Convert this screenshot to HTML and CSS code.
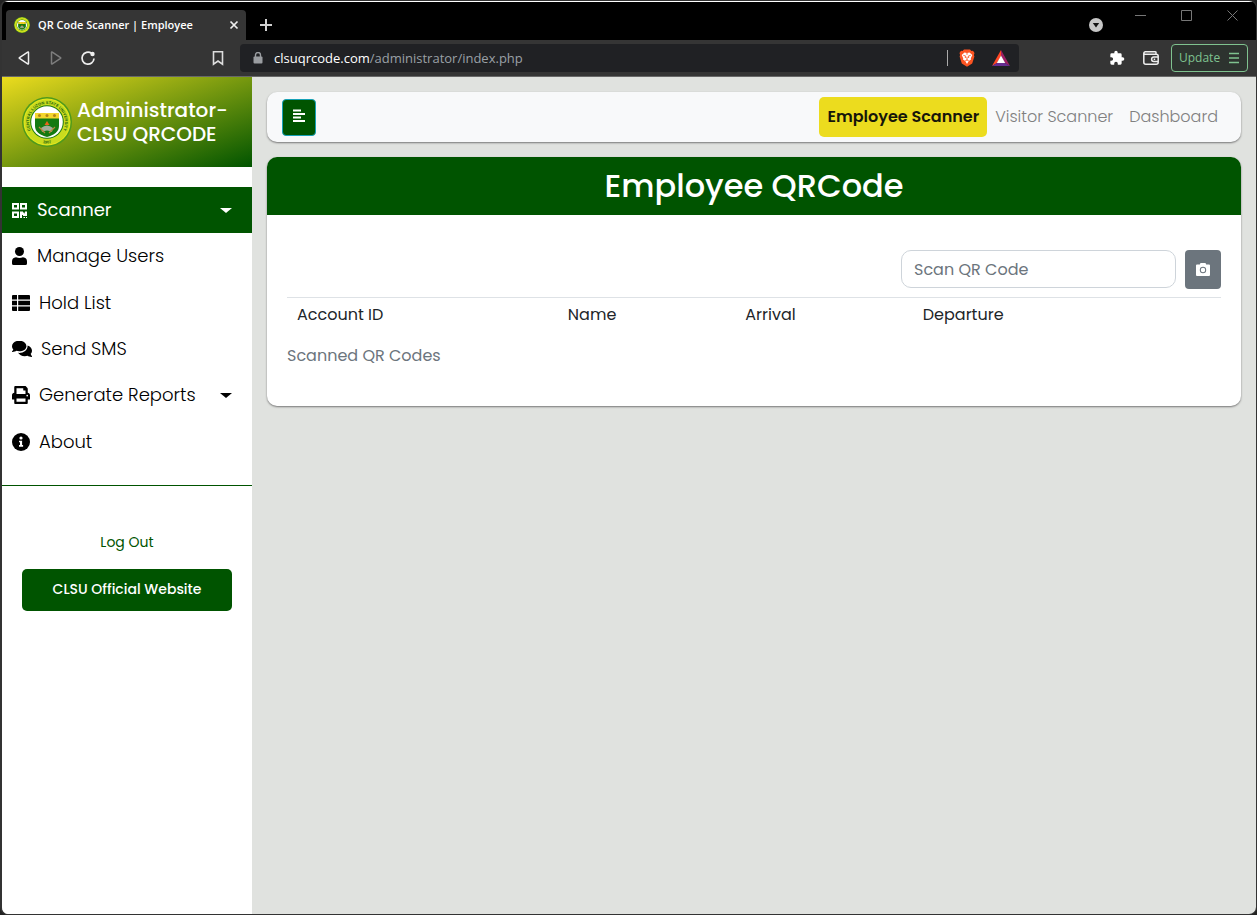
FILE: index.html
```html
<!DOCTYPE html>
<html lang="en">
<head>
<meta charset="utf-8">
<meta name="viewport" content="width=device-width, initial-scale=1">
<title>QR Code Scanner | Employee</title>
<link rel="stylesheet" href="styles.css">
</head>
<body>
<svg class="defs" width="0" height="0" aria-hidden="true">
  <symbol id="seal" viewBox="0 0 50 50">
    <circle cx="25" cy="25" r="25" fill="#4f9a1c"/>
    <circle cx="25" cy="25" r="23.500" fill="#e6e61c"/>
    <circle cx="25" cy="25" r="22.500" fill="#c9dc1e"/>
    <circle cx="25" cy="25" r="16.800" fill="#1d7a12"/>
    <circle cx="25" cy="25" r="15.800" fill="#fff"/>
    <path d="M13 16h24v13c0 6-5 9-12 11-7-2-12-5-12-11z" fill="#137a10"/>
    <path d="M13 16h24v5.500H13z" fill="#f4d62c"/>
    <g fill="#b28418"><circle cx="17.500" cy="18.500" r="1.500"/><circle cx="25" cy="18.500" r="1.500"/><circle cx="32.500" cy="18.500" r="1.500"/></g>
    <path d="M19 31q6-5 12 0l-1 4q-5-3-10 0z" fill="#9fae9b"/>
    <path d="M25 24l2.500 4h-5z" fill="#e8641b"/>
    <path d="M17 30l6 6M33 30l-6 6" stroke="#b9873b" stroke-width="1.200"/>
  </symbol>
</svg>
<div class="browser">
  <header class="chrome">
    <div class="tabs">
      <div class="tab">
        <svg class="favicon" viewBox="0 0 50 50" aria-hidden="true"><use href="#seal"/></svg>
        <span class="tab-title">QR Code Scanner | Employee</span>
        <button class="icon-btn" aria-label="Close tab"><svg width="10" height="10" viewBox="0 0 10 10"><path d="M1.500 1.500l7 7M8.500 1.500l-7 7" stroke="#eee" stroke-width="1.700"/></svg></button>
      </div>
      <button class="icon-btn new-tab" aria-label="New tab"><svg width="12" height="12" viewBox="0 0 12 12"><path d="M6 0v12M0 6h12" stroke="#d0d0d0" stroke-width="2"/></svg></button>
      <div class="window-controls">
        <button class="icon-btn tab-search" aria-label="Search tabs"><svg width="14" height="14" viewBox="0 0 14 14"><circle cx="7" cy="7" r="7" fill="#c6c6c6"/><path d="M3.800 5h6.400L7 9.500z" fill="#111"/></svg></button>
        <button class="icon-btn" aria-label="Minimize"><svg width="11" height="11" viewBox="0 0 11 11"><path d="M0 5.500h11" stroke="#777"/></svg></button>
        <button class="icon-btn" aria-label="Maximize"><svg width="11" height="11" viewBox="0 0 11 11"><path d="M.500 .500h10v10H.500z" fill="none" stroke="#777"/></svg></button>
        <button class="icon-btn" aria-label="Close window"><svg width="11" height="11" viewBox="0 0 11 11"><path d="M.500 .500l10 10M10.500 .500l-10 10" stroke="#777"/></svg></button>
      </div>
    </div>
    <div class="toolbar">
      <div class="history">
        <button class="icon-btn" aria-label="Back"><svg width="16" height="16" viewBox="0 0 16 16"><path d="M12.500 2.500v11q0 .800-.800.300L3.500 8.500q-.600-.500 0-1l8.200-5.300q.800-.500.800.300z" fill="none" stroke="#eee" stroke-width="1.500"/></svg></button>
        <button class="icon-btn" aria-label="Forward"><svg width="16" height="16" viewBox="0 0 16 16"><path d="M3.500 2.500v11q0 .800.800.300l8.200-5.300q.600-.500 0-1L4.300 2.200q-.800-.500-.800.300z" fill="none" stroke="#7d7d7d" stroke-width="1.500"/></svg></button>
        <button class="icon-btn" aria-label="Reload"><svg width="16" height="16" viewBox="0 0 16 16"><path d="M14 8.500A6 6 0 1 1 11.500 3.300" fill="none" stroke="#eee" stroke-width="1.700"/><circle cx="12.500" cy="4" r="2.200" fill="#eee"/></svg></button>
      </div>
      <button class="icon-btn" aria-label="Bookmark"><svg width="16" height="16" viewBox="0 0 16 16"><path d="M3.500 1.800h9v12.400L8 11l-4.500 3.200z" fill="none" stroke="#ddd" stroke-width="1.600"/></svg></button>
      <div class="address">
        <svg width="10" height="12" viewBox="0 0 10 12" aria-hidden="true"><path d="M2.500 5V3a2.500 2.500 0 0 1 5 0v2" fill="none" stroke="#9a9da1" stroke-width="1.400"/><rect x=".500" y="4.500" width="9" height="7" rx="1" fill="#9a9da1"/></svg>
        <span class="url"><span class="host">clsuqrcode.com</span>/administrator/index.php</span>
        <span class="divider"></span>
        <button class="icon-btn" aria-label="Brave shields"><svg width="16" height="18" viewBox="0 0 16 18"><path d="M5 .500h6l1.500 1.500 1.500-.200L15.500 4l-.600 2 .500 1.500-2.200 7L8 17.800l-5.200-3.300-2.200-7L1.100 6 .500 4 2 1.800l1.500.200z" fill="#fb5422"/><path d="M5.500 3.500L8 4l2.500-.500L13.300 6l-1.500 3.200.200 1.300-2.200 1.500L8 15l-1.800-3L4 10.500l.200-1.300L2.700 6z" fill="#fff"/><path d="M4.300 6.300l2.500.900-.600 1.800M11.700 6.300l-2.500.900.600 1.800M8 8v3M6.300 11.700L8 11l1.700.700M8 3.800v2" fill="none" stroke="#fb5422" stroke-width=".900"/></svg></button>
        <button class="icon-btn rewards" aria-label="Brave rewards"><svg width="18" height="16" viewBox="0 0 18 16"><path d="M9 0L0 16l5-3L9 6z" fill="#ff4724"/><path d="M9 0l9 16-5-3L9 6z" fill="#9e1f63"/><path d="M0 16h18l-5-3H5z" fill="#662d91"/><path d="M9 5.500l4.200 7.500H4.800z" fill="#fff"/></svg></button>
      </div>
      <div class="actions">
        <button class="icon-btn" aria-label="Extensions"><svg width="16" height="16" viewBox="0 0 24 24"><path fill="#fff" d="M20.500 11H19V7a2 2 0 0 0-2-2h-4V3.500a2.500 2.500 0 0 0-5 0V5H4a2 2 0 0 0-2 2v3.800h1.500a2.700 2.700 0 0 1 0 5.400H2V20a2 2 0 0 0 2 2h3.800v-1.500a2.700 2.700 0 0 1 5.400 0V22H17a2 2 0 0 0 2-2v-4h1.500a2.500 2.500 0 0 0 0-5z"/></svg></button>
        <button class="icon-btn" aria-label="Wallet"><svg width="16" height="14" viewBox="0 0 16 14" fill="none" stroke="#eee" stroke-width="1.500"><path d="M13 3V1.500q0-.700-1-.700H2.500Q.800.800.800 2.500v8.700q0 2 2 2h10.400q2 0 2-2V5.300q0-2-2-2H2.500Q1 3.300 1 2.300"/><path d="M15 6h-4.200a2.200 2.200 0 0 0 0 4.400H15M10.700 8.200h1.500"/></svg></button>
        <button class="update">Update <svg width="10" height="12" viewBox="0 0 10 12" aria-hidden="true"><path d="M0 1.500h10M0 6h10M0 10.500h10" stroke="#7fc28f" stroke-width="1.500"/></svg></button>
      </div>
    </div>
  </header>

  <div class="page">
    <aside class="sidebar">
      <div class="brand">
        <svg class="brand-seal" viewBox="0 0 50 50" role="img" aria-label="University seal">
          <use href="#seal"/>
          <path id="arc-top" d="M11.200 36.600A18 18 0 1 1 38.800 36.600" fill="none"/>
          <path id="arc-low" d="M17 44.500Q25 48.500 33 44.500" fill="none"/>
          <text class="seal-text"><textPath href="#arc-top" startOffset="50%">CENTRAL LUZON STATE UNIVERSITY</textPath></text>
          <text class="seal-text"><textPath href="#arc-low" startOffset="50%">1907</textPath></text>
        </svg>
        <h1>Administrator-<br>CLSU QRCODE</h1>
      </div>
      <nav class="menu" aria-label="Main">
        <a class="active" href="#scanner"><svg width="16" height="15" viewBox="0 0 16 15" fill="currentColor"><path fill-rule="evenodd" d="M0 0h7v6.500H0zM2 2v2.500h3V2zM8 0h7v6.500H8zM10 2v2.500h3V2zM0 8.500h7V15H0zM2 10.500V13h3v-2.500zM8 8.500h3v1h1.500v1H13v-2h2V13h-4v-1h-1v3H8zM11.500 14H13v1h-1.500zM14 14h1v1h-1z"/></svg>Scanner<i class="caret"></i></a>
        <a href="#users"><svg width="16" height="18" viewBox="0 0 16 18" fill="currentColor"><circle cx="7.500" cy="4.500" r="4.500"/><path d="M4 10.200q3.500 1.500 7 0 4 .300 4 4.200v2q0 1.600-1.600 1.600H1.600Q0 18 0 16.400v-2q0-3.900 4-4.200z"/></svg>Manage Users</a>
        <a href="#hold"><svg width="18" height="16" viewBox="0 0 18 16" fill="currentColor"><path d="M1 0h4v4.500H0V1q0-1 1-1zM6.200 0H17q1 0 1 1v3.500H6.200zM0 5.700h5v4.600H0zM6.200 5.700H18v4.600H6.200zM0 11.500h5V16H1q-1 0-1-1zM6.200 11.500H18V15q0 1-1 1H6.200z"/></svg>Hold List</a>
        <a href="#sms"><svg width="20" height="16" viewBox="0 0 576 448" fill="currentColor"><path d="M416 160c0-88-93-160-208-160S0 72 0 160c0 34 14 66 38 92-13 30-36 54-36 55-4 4-4 9-2 13 2 5 7 8 12 8 49 0 90-18 115-35 24 8 52 11 81 11 115 0 208-55 208-144zm122 220c24-26 38-58 38-92 0-67-54-124-130-148 1 6 2 13 2 20 0 106-108 192-240 192-11 0-21-1-32-2 32 57 106 98 192 98 29 0 57-5 81-13 25 17 66 35 115 35 5 0 10-3 12-8 1-4 1-9-2-13 0-1-23-25-36-69z" transform="translate(0 -16)"/></svg>Send SMS</a>
        <a href="#reports"><svg width="18" height="18" viewBox="0 0 512 512" fill="currentColor"><path fill-rule="evenodd" d="M448 192V77c0-8-3-17-9-23l-45-45c-6-6-14-9-23-9H96C78 0 64 14 64 32v160c-35 0-64 29-64 64v112c0 9 7 16 16 16h48v96c0 18 14 32 32 32h320c18 0 32-14 32-32v-96h48c9 0 16-7 16-16V256c0-35-29-64-64-64zm-64 256H128v-96h256zm0-224H128V64h192v48c0 9 7 16 16 16h48zm48 72a24 24 0 1 1 0-48 24 24 0 0 1 0 48z"/></svg>Generate Reports<i class="caret"></i></a>
        <a href="#about"><svg width="18" height="18" viewBox="0 0 18 18"><circle cx="9" cy="9" r="9" fill="currentColor"/><circle cx="9" cy="5" r="1.600" fill="#fff"/><path d="M7 7.700h3.100v4.300h1v1.700H7V12h1V9.300H7z" fill="#fff"/></svg>About</a>
      </nav>
      <div class="links">
        <a class="logout" href="#logout">Log Out</a>
        <a class="official" href="#website">CLSU Official Website</a>
      </div>
    </aside>
    <main class="content">
      <nav class="topbar" aria-label="Scanners">
        <button class="toggle" aria-label="Toggle sidebar"><svg width="12" height="14" viewBox="0 0 12 14"><path d="M0 1.500h8M0 5h12M0 8.500h8M0 12h12" stroke="#fff" stroke-width="1.800"/></svg></button>
        <div class="tabs-nav">
          <a class="current" href="#employee">Employee Scanner</a>
          <a href="#visitor">Visitor Scanner</a>
          <a href="#dashboard">Dashboard</a>
        </div>
      </nav>
      <section class="card">
        <h2>Employee QRCode</h2>
        <div class="card-body">
          <form class="scan">
            <input type="text" placeholder="Scan QR Code" aria-label="Scan QR Code">
            <button type="button" aria-label="Open camera"><svg width="14" height="13" viewBox="0 0 14 13"><path fill="#fff" fill-rule="evenodd" d="M4.500 0h5l.700 1.500H13q1 0 1 1V12q0 1-1 1H1q-1 0-1-1V2.500q0-1 1-1h2.800zM7 3.800a3.200 3.200 0 1 0 0 6.400 3.200 3.200 0 0 0 0-6.400zm0 1a2.200 2.200 0 1 1 0 4.400 2.200 2.200 0 0 1 0-4.400z"/></svg></button>
          </form>
          <table>
            <caption>Scanned QR Codes</caption>
            <thead><tr><th class="col-id">Account ID</th><th class="col-name">Name</th><th class="col-arrival">Arrival</th><th>Departure</th></tr></thead>
          </table>
        </div>
      </section>
    </main>
  </div>
</div>
</body>
</html>
```
FILE: styles.css
```css
* { box-sizing: border-box; }
body {
  margin: 0;
  background: #222;
  font-family: Poppins, Inter, sans-serif;
  font-size: 16px;
  line-height: 24px;
  color: #212529;
}
a { text-decoration: none; color: inherit; }
button { font: inherit; cursor: pointer; }
svg { display: block; flex: none; }
.defs { position: absolute; }

.browser {
  min-height: 100vh;
  display: flex;
  flex-direction: column;
  border: solid #333;
  border-width: 1px 1px 1px 2px;
  border-radius: 8px;
  overflow: hidden;
}
.chrome {
  font-family: "Segoe UI", "Open Sans", sans-serif;
  border-bottom: 1px solid #686868;
}
.icon-btn {
  display: flex;
  padding: 0;
  border: 0;
  background: none;
}
.tabs {
  display: flex;
  align-items: flex-end;
  height: 39px;
  padding-left: 4px;
  background: #000;
  border-top: 1px solid #fff;
}
.tab {
  display: flex;
  align-items: center;
  width: 240px;
  height: 30px;
  padding: 0 7px 0 8px;
  gap: 8px;
  background: #353535;
  border-radius: 4px 4px 0 0;
}
.favicon { width: 16px; height: 16px; }
.tab-title {
  flex: 1;
  font-size: 11px;
  font-weight: 600;
  color: #fff;
  white-space: nowrap;
}
.new-tab { margin: 0 0 9px 14px; }
.window-controls {
  display: flex;
  gap: 35px;
  margin-left: auto;
  padding-right: 18px;
  align-self: flex-start;
  padding-top: 8px;
}
.tab-search { margin-top: 8px; margin-right: -3px; }
.toolbar {
  display: flex;
  align-items: center;
  height: 36px;
  padding: 0 8px 0 14px;
  background: #353535;
}
.history { display: flex; gap: 16px; width: 194px; }
.address {
  display: flex;
  align-items: center;
  flex: 1;
  height: 28px;
  margin-left: 14px;
  padding: 0 9px 0 13px;
  background: #202124;
  border-radius: 4px;
}
.url {
  flex: 1;
  margin-left: 11px;
  font-size: 13px;
  color: #9aa0a6;
}
.host { color: #fff; }
.divider { width: 1px; height: 16px; margin-right: 11px; background: #aaa; }
.rewards { margin-left: 17px; }
.actions {
  display: flex;
  align-items: center;
  justify-content: flex-end;
  gap: 18px;
  width: 229px;
}
.update {
  display: flex;
  align-items: center;
  justify-content: space-between;
  width: 77px;
  height: 28px;
  margin-left: -6px;
  padding: 0 8px 0 7px;
  border: 1px solid #7fc28f;
  border-radius: 4px;
  background: #2d332f;
  color: #7fc28f;
  font-size: 12px;
}

.page { display: flex; flex: 1; background: #e0e2df; }
.sidebar { flex: none; width: 250px; background: #fff; color: #000; }
.brand {
  display: flex;
  align-items: center;
  gap: 5px;
  height: 90px;
  padding-left: 20px;
  background: linear-gradient(to bottom right, #ecdc1e, #005400);
}
.brand-seal { width: 50px; height: 50px; overflow: visible; }
.seal-text {
  font-family: "Liberation Sans", sans-serif;
  font-size: 4px;
  font-weight: 700;
  fill: #17620d;
  text-anchor: middle;
}
.brand h1 {
  margin: 0;
  font-size: 20px;
  font-weight: 500;
  color: #fff;
}
.menu {
  display: grid;
  grid-auto-rows: 1fr;
  min-height: 319px;
  padding: 20px 0;
  border-bottom: 1px solid #005400;
}
.menu a {
  display: flex;
  align-items: center;
  gap: 9px;
  padding: 0 20px 0 10px;
  font-size: 18px;
  font-weight: 300;
}
.menu .active {
  background: #005400;
  color: #fff;
  font-weight: 400;
}
.caret {
  margin-left: auto;
  border: solid transparent;
  border-top-color: currentColor;
  border-width: 5px 6px 0;
}
.links {
  display: flex;
  flex-direction: column;
  gap: 15px;
  padding: 44px 20px;
  font-size: 14px;
  text-align: center;
}
.logout { color: #005400; }
.official {
  padding: 8px 8px 10px;
  border-radius: 5px;
  background: #005400;
  color: #fff;
  font-weight: 500;
}

.content { flex: 1; padding: 15px; }
.topbar {
  display: flex;
  align-items: center;
  justify-content: space-between;
  height: 50px;
  padding: 0 15px;
  background: #f8f9fa;
  border-radius: 10px;
  box-shadow: 0 1px 2px #777;
}
.toggle {
  display: flex;
  align-items: center;
  justify-content: center;
  width: 34px;
  height: 37px;
  padding: 0 0 3px;
  border: 1px solid #17a2b8;
  border-radius: 4px;
  background: #005400;
}
.tabs-nav { display: flex; }
.tabs-nav a {
  padding: 8px;
  color: #808080;
  font-weight: 300;
}
.tabs-nav .current {
  border-radius: 5px;
  background: #ecdc1e;
  color: #16160a;
  font-weight: 600;
}
.card {
  margin-top: 15px;
  background: #fff;
  border-radius: 10px;
  box-shadow: 0 1px 2px #777;
  overflow: hidden;
}
.card h2 {
  margin: 0;
  padding: 9px;
  background: #005400;
  color: #fff;
  font-size: 32px;
  font-weight: 500;
  line-height: 40px;
  text-align: center;
}
.card-body { padding: 35px 20px 38px; }
.scan {
  display: flex;
  justify-content: flex-end;
  align-items: flex-start;
  gap: 9px;
  margin-bottom: 8px;
}
.scan input {
  width: 275px;
  height: 38px;
  padding: 0 12px;
  border: 1px solid #ced4da;
  border-radius: 10px;
  font: inherit;
}
.scan input::placeholder { color: #6c757d; opacity: 1; }
.scan button {
  display: flex;
  align-items: center;
  justify-content: center;
  width: 36px;
  height: 39px;
  border: 0;
  border-radius: 4px;
  background: #6c757d;
}
table {
  width: 100%;
  border-collapse: collapse;
  table-layout: fixed;
  border-top: 1px solid #dee2e6;
}
th {
  padding: 5px 10px;
  text-align: left;
  font-weight: 400;
}
.col-id { width: 29%; }
.col-name { width: 19%; }
.col-arrival { width: 19%; }
caption {
  caption-side: bottom;
  padding: 12px 0 0;
  color: #6c757d;
  text-align: left;
}
```
